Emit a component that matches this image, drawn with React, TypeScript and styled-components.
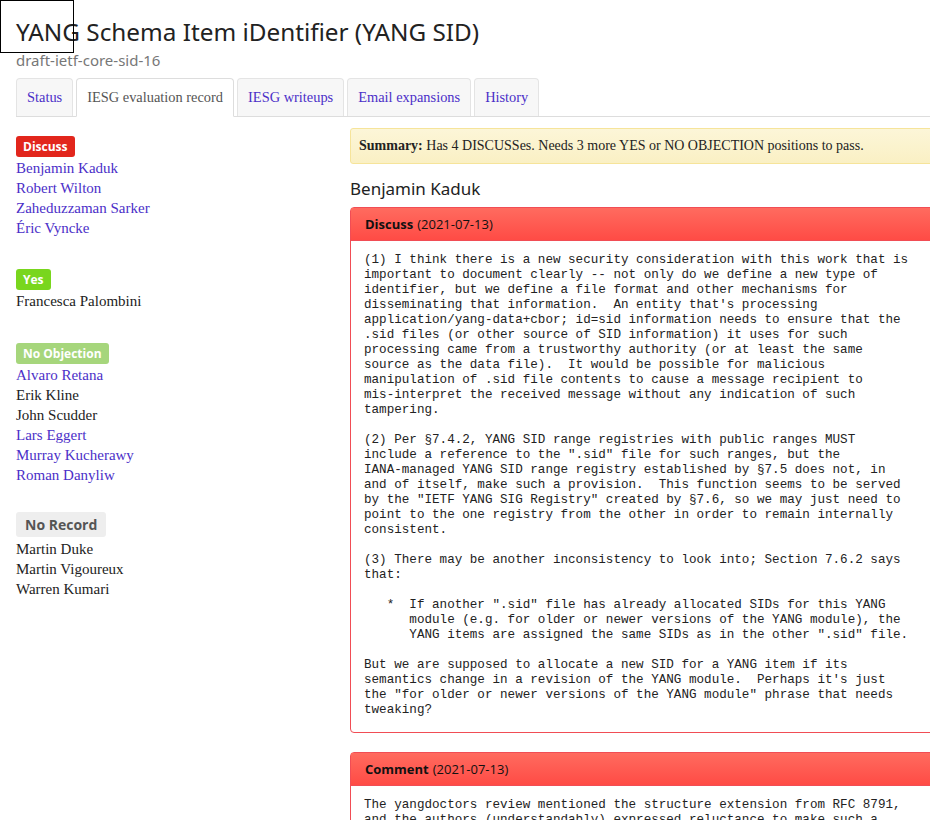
import React from "react";
import styled, { createGlobalStyle } from "styled-components";

const Global = createGlobalStyle`
  html, body { margin: 0; padding: 0; background: #fff; overflow: hidden; }
  body { font-family: "Liberation Serif", serif; color: #222; }
`;

const Page = styled.div`
  position: relative;
  width: 1200px;
  padding: 0 0 0 16px;
`;

const Marker = styled.div`
  position: absolute;
  left: 0;
  top: 0;
  width: 72px;
  height: 51px;
  border: 1px solid #000;
`;

const Title = styled.h1`
  margin: 0;
  padding-top: 16px;
  font-family: "Noto Sans", sans-serif;
  font-weight: 400;
  font-size: 24.3px;
  line-height: 32px;
  color: #222;
`;

const Subtitle = styled.div`
  margin-top: 2px;
  font-family: "Noto Sans", sans-serif;
  font-size: 15px;
  line-height: 20px;
  color: #777;
`;

const Tabs = styled.div`
  display: flex;
  gap: 3px;
  margin-top: 8px;
  border-bottom: 1px solid #ddd;
  height: 38px;
`;

const Tab = styled.div<{ $active?: boolean }>`
  box-sizing: border-box;
  height: ${(p) => (p.$active ? "39px" : "38px")};
  padding: 0 10px;
  display: flex;
  align-items: center;
  font-size: 14.4px;
  border: 1px solid ${(p) => (p.$active ? "#ddd" : "#e4e4e4")};
  border-bottom: ${(p) => (p.$active ? "1px solid #fff" : "none")};
  border-radius: 4px 4px 0 0;
  background: ${(p) => (p.$active ? "#fff" : "#f7f7f7")};
  color: ${(p) => (p.$active ? "#555" : "#4b2fc8")};
`;

const Row = styled.div`
  display: grid;
  grid-template-columns: 334px 840px;
`;

const LeftCol = styled.div`
  padding-top: 19px;
`;

const Group = styled.div<{ $gap: number }>`
  margin-top: ${(p) => p.$gap}px;
`;

const Badge = styled.span<{ $bg: string; $fg: string; $big?: boolean }>`
  display: inline-block;
  background: ${(p) => p.$bg};
  color: ${(p) => p.$fg};
  font-family: "Open Sans", sans-serif;
  font-weight: 700;
  font-size: ${(p) => (p.$big ? "14px" : "12px")};
  line-height: ${(p) => (p.$big ? "25px" : "21px")};
  padding: ${(p) => (p.$big ? "0 9px" : "0 7px")};
  border-radius: 3px;
  margin-bottom: ${(p) => (p.$big ? "2px" : "1px")};
`;

const Name = styled.div<{ $link?: boolean }>`
  font-size: 15px;
  line-height: 20px;
  color: ${(p) => (p.$link ? "#4b2fc8" : "#222")};
`;

const RightCol = styled.div`
  padding-top: 11px;
`;

const Summary = styled.div`
  box-sizing: border-box;
  height: 36px;
  display: flex;
  align-items: center;
  padding: 0 8px;
  background: linear-gradient(#fcf6d8, #faf0c4);
  border: 1px solid #f6e49a;
  border-radius: 3px;
  font-size: 14px;
  color: #222;
`;

const Who = styled.h3`
  margin: 14px 0 7px;
  font-family: "Noto Sans", sans-serif;
  font-weight: 400;
  font-size: 17px;
  line-height: 22px;
  color: #222;
`;

const Panel = styled.div`
  border: 1px solid #f14d55;
  border-radius: 4px;
  margin-bottom: 19px;
`;

const PanelHead = styled.div`
  height: 32px;
  display: flex;
  align-items: center;
  padding: 0 14px;
  background: linear-gradient(#ff6b5f, #ff4b45);
  border-bottom: 1px solid #f14d55;
  font-family: "Open Sans", sans-serif;
  font-size: 13px;
  color: #111;
  b { font-weight: 700; margin-right: 4px; }
`;

const PanelBody = styled.pre`
  margin: 0;
  padding: 12px 13px 14px;
  font-family: "Liberation Mono", monospace;
  font-size: 12.6px;
  line-height: 15px;
  color: #222;
  white-space: pre;
`;

const discuss = `(1) I think there is a new security consideration with this work that is
important to document clearly -- not only do we define a new type of
identifier, but we define a file format and other mechanisms for
disseminating that information.  An entity that's processing
application/yang-data+cbor; id=sid information needs to ensure that the
.sid files (or other source of SID information) it uses for such
processing came from a trustworthy authority (or at least the same
source as the data file).  It would be possible for malicious
manipulation of .sid file contents to cause a message recipient to
mis-interpret the received message without any indication of such
tampering.

(2) Per §7.4.2, YANG SID range registries with public ranges MUST
include a reference to the ".sid" file for such ranges, but the
IANA-managed YANG SID range registry established by §7.5 does not, in
and of itself, make such a provision.  This function seems to be served
by the "IETF YANG SIG Registry" created by §7.6, so we may just need to
point to the one registry from the other in order to remain internally
consistent.

(3) There may be another inconsistency to look into; Section 7.6.2 says
that:

   *  If another ".sid" file has already allocated SIDs for this YANG
      module (e.g. for older or newer versions of the YANG module), the
      YANG items are assigned the same SIDs as in the other ".sid" file.

But we are supposed to allocate a new SID for a YANG item if its
semantics change in a revision of the YANG module.  Perhaps it's just
the "for older or newer versions of the YANG module" phrase that needs
tweaking?`;

const comment = `The yangdoctors review mentioned the structure extension from RFC 8791,
and the authors (understandably) expressed reluctance to make such a
change at this stage.`;

const groups: {
  label: string;
  bg: string;
  fg: string;
  big?: boolean;
  gap: number;
  names: [string, boolean][];
}[] = [
  {
    label: "Discuss",
    bg: "#e2261c",
    fg: "#fff",
    gap: 0,
    names: [
      ["Benjamin Kaduk", true],
      ["Robert Wilton", true],
      ["Zaheduzzaman Sarker", true],
      ["Éric Vyncke", true],
    ],
  },
  { label: "Yes", bg: "#79d61d", fg: "#fff", gap: 31, names: [["Francesca Palombini", false]] },
  {
    label: "No Objection",
    bg: "#a6d67c",
    fg: "#fff",
    gap: 32,
    names: [
      ["Alvaro Retana", true],
      ["Erik Kline", false],
      ["John Scudder", false],
      ["Lars Eggert", true],
      ["Murray Kucherawy", true],
      ["Roman Danyliw", true],
    ],
  },
  {
    label: "No Record",
    bg: "#eeeeee",
    fg: "#555",
    big: true,
    gap: 27,
    names: [
      ["Martin Duke", false],
      ["Martin Vigoureux", false],
      ["Warren Kumari", false],
    ],
  },
];

export default function App() {
  return (
    <>
      <Global />
      <Page>
        <Marker />
        <Title>YANG Schema Item iDentifier (YANG SID)</Title>
        <Subtitle>draft-ietf-core-sid-16</Subtitle>
        <Tabs>
          <Tab>Status</Tab>
          <Tab $active>IESG evaluation record</Tab>
          <Tab>IESG writeups</Tab>
          <Tab>Email expansions</Tab>
          <Tab>History</Tab>
        </Tabs>
        <Row>
          <LeftCol>
            {groups.map((g) => (
              <Group key={g.label} $gap={g.gap}>
                <Badge $bg={g.bg} $fg={g.fg} $big={g.big}>
                  {g.label}
                </Badge>
                {g.names.map(([n, l]) => (
                  <Name key={n} $link={l}>
                    {n}
                  </Name>
                ))}
              </Group>
            ))}
          </LeftCol>
          <RightCol>
            <Summary>
              <b>Summary:</b>&nbsp;Has 4 DISCUSSes. Needs 3 more YES or NO OBJECTION positions to pass.
            </Summary>
            <Who>Benjamin Kaduk</Who>
            <Panel>
              <PanelHead>
                <b>Discuss</b>(2021-07-13)
              </PanelHead>
              <PanelBody>{discuss}</PanelBody>
            </Panel>
            <Panel>
              <PanelHead>
                <b>Comment</b>(2021-07-13)
              </PanelHead>
              <PanelBody>{comment}</PanelBody>
            </Panel>
          </RightCol>
        </Row>
      </Page>
    </>
  );
}
